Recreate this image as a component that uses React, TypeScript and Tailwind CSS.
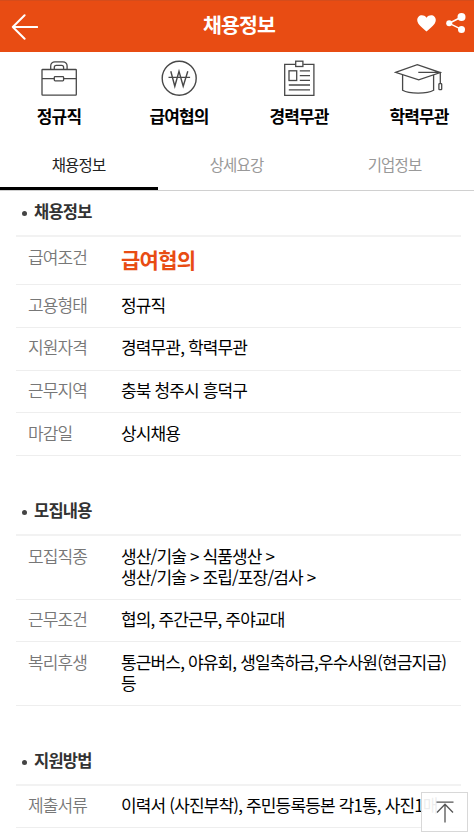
import type { ReactNode } from 'react'

interface Row {
    label: string
    value: ReactNode
    className: string
}

interface SectionProps {
    title: string
    rows: Row[]
    className?: string
}

const summary = [
    { label: '정규직', icon: <BriefcaseIcon /> },
    { label: '급여협의', icon: <WonIcon /> },
    { label: '경력무관', icon: <ResumeIcon /> },
    { label: '학력무관', icon: <CapIcon /> },
]

const tabs = ['채용정보', '상세요강', '기업정보']

const jobRows: Row[] = [
    {
        label: '급여조건',
        value: <strong className="block pt-[3px] text-[21px] font-bold tracking-[-0.7px] text-[#e84c13]">급여협의</strong>,
        className: 'h-[48.4px]',
    },
    { label: '고용형태', value: '정규직', className: 'h-[42.6px]' },
    { label: '지원자격', value: '경력무관, 학력무관', className: 'h-[42.6px]' },
    { label: '근무지역', value: '충북 청주시 흥덕구', className: 'h-[42.6px]' },
    { label: '마감일', value: '상시채용', className: 'h-[42.6px]' },
]

const recruitRows: Row[] = [
    {
        label: '모집직종',
        value: (
            <>
                <p>생산/기술 &gt; 식품생산 &gt;</p>
                <p>생산/기술 &gt; 조립/포장/검사 &gt;</p>
            </>
        ),
        className: 'h-[63.4px]',
    },
    { label: '근무조건', value: '협의, 주간근무, 주야교대', className: 'h-[42.6px]' },
    {
        label: '복리후생',
        value: (
            <>
                <p>통근버스, 야유회, 생일축하금,우수사원(현금지급)</p>
                <p>등</p>
            </>
        ),
        className: 'h-[63.4px]',
    },
]

const applyRows: Row[] = [
    { label: '제출서류', value: '이력서 (사진부착), 주민등록등본 각1통, 사진1매', className: 'h-[42.6px]' },
]

function BriefcaseIcon() {
    return (
        <svg width="48" height="40" viewBox="0 0 48 40" fill="none" stroke="#484848" strokeWidth="1.3">
            <rect x="7" y="11.5" width="34.3" height="25.7" rx="0.6" />
            <path d="M7 20.6h12.3M28.7 20.6h12.6" />
            <rect x="19.3" y="18.6" width="9.3" height="4.2" rx="0.8" />
            <path d="M15.7 11.5V8a4.2 4.2 0 0 1 4.2-4.2h8A4.2 4.2 0 0 1 32.1 8v3.5M19.3 11.5V9.4a2 2 0 0 1 2-2h5.3a2 2 0 0 1 2 2v2.1" />
        </svg>
    )
}

function WonIcon() {
    return (
        <svg width="48" height="40" viewBox="0 0 48 40" fill="none" stroke="#484848" strokeWidth="1.4">
            <circle cx="24.2" cy="20.2" r="17" />
            <path d="M15.8 13.3l4 15 4.2-15 4.2 15 4.6-15M13.5 19.4h21.6" />
        </svg>
    )
}

function ResumeIcon() {
    return (
        <svg width="48" height="40" viewBox="0 0 48 40" fill="none" stroke="#484848" strokeWidth="1.3">
            <path d="M20.3 6.3H9.7v31h29.2v-31H28.2" />
            <rect x="20.7" y="3.2" width="7.2" height="5.3" />
            <rect x="14" y="12.8" width="7.7" height="9.7" />
            <path d="M24.8 12.9H35M24.8 17.6H35M24.8 22.4H35M13.8 27H35M13.8 31.8H35" />
        </svg>
    )
}

function CapIcon() {
    return (
        <svg width="50" height="40" viewBox="0 0 50 40" fill="none" stroke="#484848" strokeWidth="1.3">
            <path d="M1.5 14.3L23.3 6.7l23 7.9-21.6 7.3zM24.3 14.3h22v11.3" />
            <path d="M8.6 17v15.3c6.5 3.7 24.5 3.7 31 0V17" />
            <rect x="44.9" y="25.7" width="2.8" height="6" rx="0.6" />
        </svg>
    )
}

function BackIcon() {
    return (
        <svg width="28" height="28" viewBox="0 0 28 28" fill="none" stroke="#fff" strokeWidth="2" strokeLinecap="round" strokeLinejoin="round">
            <path d="M14.6 2.2L2.8 14l11.8 11.8M2.8 14h24.4" />
        </svg>
    )
}

function HeartIcon() {
    return (
        <svg width="19" height="17" viewBox="0 0 19 17" fill="#fff">
            <path d="M9.5 16.6C7 14.3 3.3 11.2 1.4 8.7-.3 6.2-.1 3.4 1.5 1.7 3.6-.5 7.4-.1 9.5 2.7c2.1-2.8 5.9-3.2 8-1 1.6 1.7 1.8 4.5.1 7-1.9 2.5-5.6 5.6-8.1 7.9z" />
        </svg>
    )
}

function ShareIcon() {
    return (
        <svg width="20" height="20" viewBox="0 0 20 20" fill="#fff" stroke="#fff">
            <path d="M15.5 4L3.2 10.3l12.3 6" fill="none" strokeWidth="1.5" />
            <circle cx="15.5" cy="4" r="4" stroke="none" />
            <circle cx="3.2" cy="10.3" r="3" stroke="none" />
            <circle cx="15.5" cy="16.4" r="3.5" stroke="none" />
        </svg>
    )
}

function Section({ title, rows, className = '' }: SectionProps) {
    return (
        <section className={className}>
            <h2 className="flex h-[35px] items-start text-[16.5px] leading-[23px] font-bold tracking-[-0.8px] text-[#333]">
                <span className="mt-[11px] mr-[7px] ml-[6px] size-[5px] rounded-full bg-[#444]" />
                {title}
            </h2>
            <dl className="border-t-2 border-[#f2f2f2]">
                {rows.map((row) => (
                    <div
                        key={row.label}
                        className={`flex border-b border-[#eeeeee] pt-[8.5px] text-[17px] leading-[21px] tracking-[-0.85px] whitespace-nowrap ${row.className}`}
                    >
                        <dt className="w-[93px] shrink-0 pl-[12px] font-[350] text-[#777]">{row.label}</dt>
                        <dd className="pl-[12px] text-black">{row.value}</dd>
                    </div>
                ))}
            </dl>
        </section>
    )
}

export default function App() {
    return (
        <div
            lang="ko"
            className="relative flex h-[832px] w-[474px] flex-col overflow-hidden bg-white font-['Noto_Sans_CJK_KR',sans-serif]"
        >
            <header className="flex h-[52px] shrink-0 items-center border-t border-[#d54c1b] bg-[#e84c13] text-white">
                <div className="w-[80px] pl-[10px]">
                    <BackIcon />
                </div>
                <h1 className="flex-1 pb-[4px] text-center text-[20.5px] font-bold tracking-[-0.9px]">채용정보</h1>
                <div className="flex w-[76px] items-center gap-[10px] pb-[7px] pl-[19px]">
                    <HeartIcon />
                    <ShareIcon />
                </div>
            </header>

            {/* Summary badges */}
            <ul className="-ml-px flex h-[87px] w-[480px] shrink-0 pt-[6px]">
                {summary.map((item) => (
                    <li key={item.label} className="flex w-[120px] flex-col items-center">
                        {item.icon}
                        <span className="mt-[6px] text-[17px] leading-[24px] font-bold tracking-[-0.85px] text-black">
                            {item.label}
                        </span>
                    </li>
                ))}
            </ul>

            <nav className="grid h-[52px] shrink-0 grid-cols-3 border-b border-[#d0d0d0]">
                {tabs.map((tab, i) => (
                    <a
                        key={tab}
                        className={`border-b-[3px] pt-[13px] pr-px text-center text-[15.5px] leading-[24px] tracking-[-0.85px] ${
                            i === 0 ? 'border-black text-[#222]' : 'border-transparent text-[#999]'
                        }`}
                    >
                        {tab}
                    </a>
                ))}
            </nav>

            <main className="pr-[13px] pl-[16px]">
                <Section title="채용정보" rows={jobRows} className="pt-[9px]" />
                <Section title="모집내용" rows={recruitRows} className="pt-[43.5px]" />
                <Section title="지원방법" rows={applyRows} className="pt-[43px]" />
            </main>

            {/* Scroll to top */}
            <button className="absolute top-[792px] left-[421px] flex h-[40px] w-[47px] items-center justify-center border border-[#d8d8d8] bg-white/93">
                <svg width="20" height="24" viewBox="0 0 20 24" fill="none" stroke="#555" strokeWidth="1.3">
                    <path d="M1.5 2.2h17M10 4.5v18M2 12.5l8-8.3 8 8.3" />
                </svg>
            </button>
        </div>
    )
}
